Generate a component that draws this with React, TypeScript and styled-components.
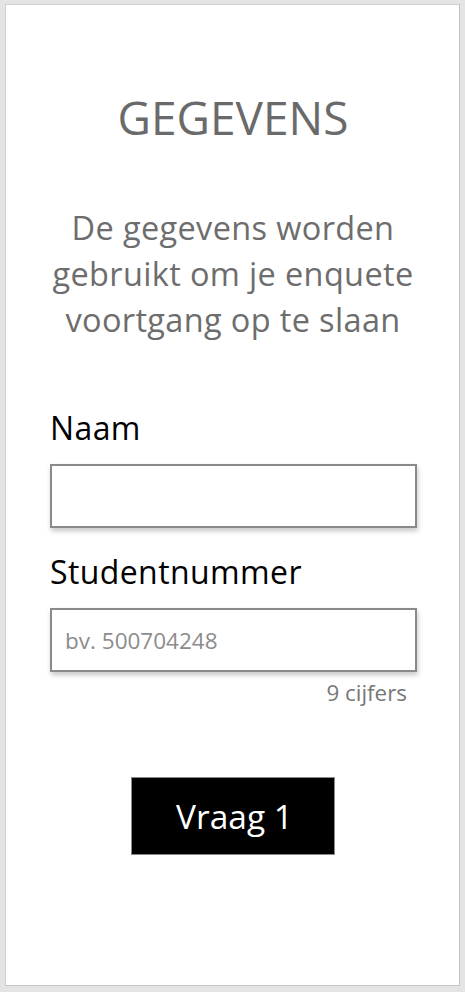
import React from "react";
import styled, { createGlobalStyle } from "styled-components";

const Global = createGlobalStyle`
  html, body { margin: 0; padding: 0; background: #e4e4e4; }
  body { font-family: "Open Sans", "Noto Sans", sans-serif; }
  * { box-sizing: border-box; }
`;

const Page = styled.div`
  padding: 4px 5px 0 5px;
  height: 992px;
`;

const Panel = styled.main`
  width: 455px;
  height: 982px;
  background: #fff;
  border: 1px solid #cfcfcf;
  border-right-color: #c4c4c4;
  border-bottom-color: #c4c4c4;
  display: flex;
  flex-direction: column;
  padding: 0 43px 0 44px;
`;

const Title = styled.h1`
  margin: 80px 0 0 0;
  font-weight: 400;
  font-size: 46px;
  line-height: 64px;
  color: #6a6a6a;
  text-align: center;
`;

const Intro = styled.p`
  margin: 56px -20px 0 -20px;
  font-size: 32.5px;
  line-height: 46px;
  letter-spacing: 0.35px;
  color: #6d6d6d;
  text-align: center;
`;

const Field = styled.div<{ $top: number }>`
  display: flex;
  flex-direction: column;
  margin-top: ${(p) => p.$top}px;
`;

const Label = styled.label`
  font-size: 32px;
  line-height: 40px;
  letter-spacing: 0.4px;
  color: #000;
  margin-bottom: 16px;
`;

const Input = styled.input`
  width: 367px;
  height: 64px;
  border: 2px solid #8a8a8a;
  background: #fff;
  padding: 0 13px;
  font-family: inherit;
  font-size: 22.5px;
  color: #222;
  box-shadow: 1px 3px 5px rgba(0, 0, 0, 0.22);
  outline: none;
  &::placeholder { color: #8c8c8c; }
`;

const Hint = styled.div`
  align-self: flex-end;
  margin-right: 9px;
  margin-top: 5px;
  font-size: 22.4px;
  line-height: 32px;
  color: #777;
`;

const Button = styled.button`
  align-self: center;
  margin: 68px 0 0 -1px;
  width: 204px;
  height: 78px;
  padding: 0 0 0 4px;
  background: #000;
  border: 1px solid #8a8a8a;
  color: #fff;
  font-family: inherit;
  font-size: 33.5px;
  cursor: pointer;
`;

export default function App() {
  return (
    <>
      <Global />
      <Page>
        <Panel>
          <Title>GEGEVENS</Title>
          <Intro>
            De gegevens worden
            <br />
            gebruikt om je enquete
            <br />
            voortgang op te slaan
          </Intro>
          <Field $top={65}>
            <Label htmlFor="naam">Naam</Label>
            <Input id="naam" type="text" />
          </Field>
          <Field $top={24}>
            <Label htmlFor="nr">Studentnummer</Label>
            <Input id="nr" type="text" placeholder="bv. 500704248" />
            <Hint>9 cijfers</Hint>
          </Field>
          <Button>Vraag 1</Button>
        </Panel>
      </Page>
    </>
  );
}
